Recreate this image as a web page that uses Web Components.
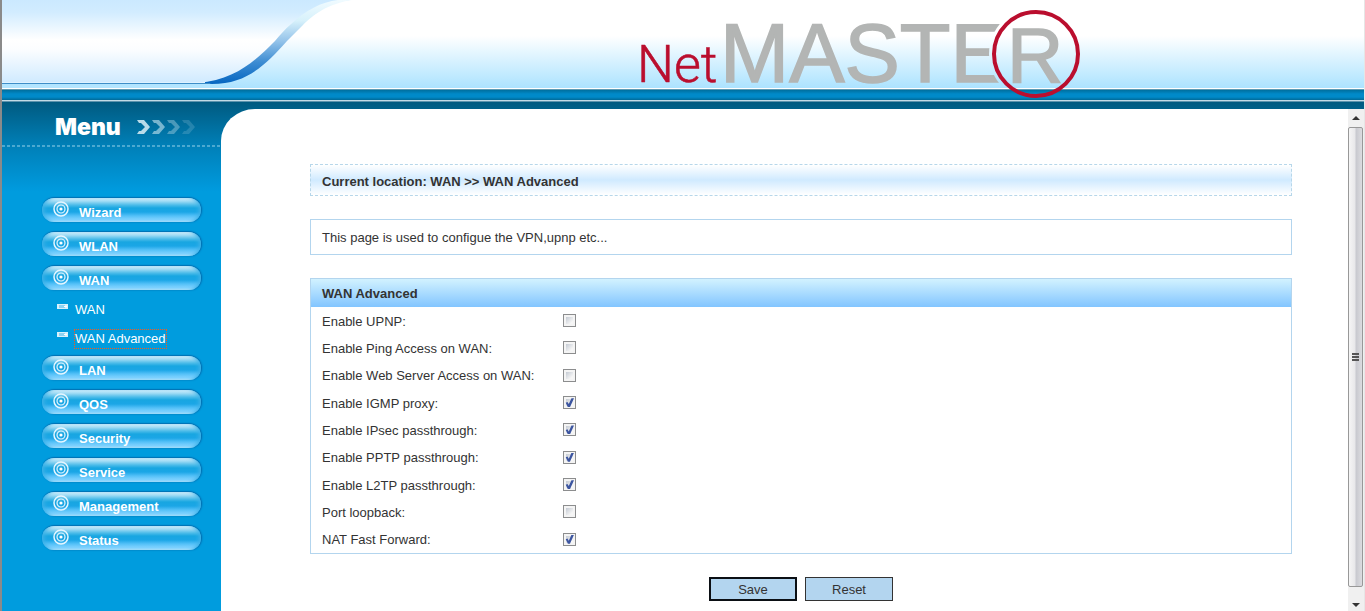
<!DOCTYPE html>
<html lang="en">
<head>
<meta charset="utf-8">
<title>NetMASTER - WAN Advanced</title>
<style>
  html, body { margin: 0; height: 100%; }
  body { font: 13px/16px "Liberation Sans", Arial, sans-serif; color: #333; background: #fff; overflow: hidden; }
</style>
</head>
<body>
<router-page>
  <brand-header slot="header"></brand-header>
  <side-menu slot="menu">
    <menu-group label="Wizard"></menu-group>
    <menu-group label="WLAN"></menu-group>
    <menu-group label="WAN">
      <menu-link>WAN</menu-link>
      <menu-link current>WAN Advanced</menu-link>
    </menu-group>
    <menu-group label="LAN"></menu-group>
    <menu-group label="QOS"></menu-group>
    <menu-group label="Security"></menu-group>
    <menu-group label="Service"></menu-group>
    <menu-group label="Management"></menu-group>
    <menu-group label="Status"></menu-group>
  </side-menu>
  <location-bar>Current location: WAN &gt;&gt; WAN Advanced</location-bar>
  <info-box>This page is used to configue the VPN,upnp etc...</info-box>
  <settings-panel></settings-panel>
  <form-actions></form-actions>
  <scroll-rail slot="rail"></scroll-rail>
</router-page>

<script>
function define(name, html, setup) {
  const template = document.createElement('template');
  template.innerHTML = html;
  customElements.define(name, class extends HTMLElement {
    constructor() {
      super();
      this.attachShadow({ mode: 'open' }).append(template.content.cloneNode(true));
      if (setup) setup(this, this.shadowRoot);
    }
  });
}

define('router-page', `
<style>
  :host { display: flex; flex-direction: column; box-sizing: border-box; height: 100vh;
    border-left: 2px solid #8a8a8a; border-right: 1px solid #e6e6e6; }
  .body { flex: 1; min-height: 0; display: grid; grid-template-columns: 219px minmax(0, 1fr);
    background: linear-gradient(#005a80, #0080b8 44px, #0099dc 86px, #009cde 90px); }
  .panel { margin-top: 7px; background: #fff; border-top-left-radius: 34px 32px; display: flex; min-height: 0; }
  main { flex: 1; min-width: 0; padding: 55px 56px 10px 89px; display: flex; flex-direction: column; overflow: hidden; }
</style>
<slot name="header"></slot>
<div class="body">
  <slot name="menu"></slot>
  <div class="panel"><main><slot></slot></main><slot name="rail"></slot></div>
</div>`);

define('brand-header', `
<style>
  :host { display: block; }
  .banner { height: 88px; display: flex; background: linear-gradient(#fff 36px, #ace3ff); }
  .swoosh { flex: none; width: 358px; height: 88px; }
  .logo { flex: none; width: 440px; height: 100px; margin-left: 280px; overflow: visible; z-index: 1; }
  .stripe { height: 14px; background: linear-gradient(#fff 1px, #5d9bb4 1px 2px, #006f9e 2px, #008ac9 6px, #008ac9 9px, #006a98 12px, #c2dbe6 12px 13px, #5c93ad 13px); }
</style>
<header>
  <div class="banner">
    <svg class="swoosh" viewBox="2 0 358 88" aria-hidden="true">
      <defs>
        <linearGradient id="sky" x1="0" y1="0" x2="0" y2="83" gradientUnits="userSpaceOnUse">
          <stop offset="0" stop-color="#cbe9ff"/><stop offset=".15" stop-color="#d2ecff"/><stop offset=".48" stop-color="#fff"/><stop offset=".6" stop-color="#fbfdff"/><stop offset="1" stop-color="#cfeaff"/>
        </linearGradient>
        <linearGradient id="wave" x1="0" y1="0" x2="0" y2="83" gradientUnits="userSpaceOnUse">
          <stop offset="0" stop-color="#f0fbff"/><stop offset=".25" stop-color="#d7f1fb"/><stop offset=".5" stop-color="#93c2e9"/><stop offset=".75" stop-color="#3d8cd2"/><stop offset="1" stop-color="#0868c2"/>
        </linearGradient>
      </defs>
      <path fill="url(#sky)" d="M0 0H350C325 3 310 16 289 38C268 62 250 83 212 83H0Z"/>
      <path fill="url(#wave)" d="M198 83C236 80 256 60 275 41C281 34 285 29 290 25C306 10 321 2 338 0H352C327 4 313 15 303 25L287 41C266 64 248 84 212 84Z"/>
      <path fill="#dff2ff" d="M0 82H205V83H0Z"/><path fill="#3e8ec8" d="M0 83H210V84H0Z"/>
      <path fill="#b3e5ff" d="M0 84H210V88H0Z"/>
    </svg>
    <svg class="logo" viewBox="640 0 440 100" role="img" aria-label="NetMASTER">
      <defs><mask id="cut" maskUnits="userSpaceOnUse" x="640" y="0" width="440" height="100">
        <rect x="640" width="440" height="100" fill="#fff"/><circle cx="1036" cy="54" r="47" fill="#000"/></mask></defs>
      <text x="637" y="82" font-family="Roboto, sans-serif" font-weight="300" font-size="52" fill="#ba0e2e" stroke="#ba0e2e" stroke-width=".5">Net</text>
      <g font-family="Liberation Sans, Arial, sans-serif" fill="#b3b5b4" stroke="#b3b5b4" stroke-width="1.5">
        <text x="720" y="82" font-size="83" mask="url(#cut)">MASTE</text><text x="1007" y="82" font-size="78">R</text>
      </g>
      <circle cx="1036" cy="54" r="42" fill="none" stroke="#ba0e2e" stroke-width="4"/>
    </svg>
  </div>
  <div class="stripe"></div>
</header>`);

define('side-menu', `
<style>
  :host { display: block; }
  .title { height: 43px; display: flex; align-items: center; gap: 16px; padding: 6px 0 0 53px; box-sizing: border-box; }
  h2 { margin: 0; font: 900 23px/24px Inter, sans-serif; color: #fff; }
  .dots { height: 2px; background: repeating-linear-gradient(90deg, #4da9d0 0 3px, transparent 3px 5px); }
  nav { padding: 51px 0 0 40px; }
</style>
<div class="title"><h2>Menu</h2>
  <svg width="60" height="14" viewBox="0 0 60 14" fill="#b9dbe9" aria-hidden="true">
    <path d="M0 0H7L13 7L7 14H0L2 11H4L8 7L4 3H2Z"/>
    <path opacity=".65" d="M15 0H22L28 7L22 14H15L17 11H19L23 7L19 3H17Z"/>
    <path opacity=".4" d="M30 0H37L43 7L37 14H30L32 11H34L38 7L34 3H32Z"/>
    <path opacity=".2" d="M45 0H52L58 7L52 14H45L47 11H49L53 7L49 3H47Z"/>
  </svg>
</div>
<div class="dots"></div>
<nav><slot></slot></nav>`);

define('menu-group', `
<style>
  :host { display: block; }
  a { display: flex; box-sizing: border-box; width: 159px; height: 24px; margin-bottom: 10px; padding: 3px 0 0 11px; gap: 10px;
    border-radius: 12px; color: #fff; font-weight: bold; text-decoration: none;
    background: linear-gradient(#e9f8ff, #a5ddf5 3px, #4dbce9 7px, #18a6e1 10px, #1ba6e6 14px, #55c1f8 18px, #84d4ff 22px, #c5ecff);
    box-shadow: inset 4px 0 4px -2px #3fb2e8, inset -4px 0 4px -2px #3fb2e8, 1px 0 2px #0067a8, 0 -1px 1px #0078bb; }
  svg { flex: none; }
  span { padding-top: 4px; }
</style>
<a href="#"><svg width="16" height="16" viewBox="0 0 16 16" fill="none" stroke="#e6f6ff" aria-hidden="true">
  <circle cx="8" cy="8" r="7" stroke-width="1.5"/><circle cx="8" cy="8" r="4" stroke-width="1.2"/><circle cx="8" cy="8" r="1.6" fill="#fff" stroke="none"/></svg><span></span></a>
<slot></slot>`, (el, root) => { root.querySelector('span').textContent = el.getAttribute('label'); });

define('menu-link', `
<style>
  :host { display: flex; height: 28px; gap: 7px; padding-left: 15px; }
  svg { flex: none; margin-top: 4px; }
  a { height: 17px; padding-top: 2px; color: #fff; text-decoration: none; }
  :host([current]) a { padding-top: 1px; margin: 1px 0 0 -1px; border: 1px dotted #ff5a14; }
</style>
<svg width="11" height="5" viewBox="0 0 11 5" aria-hidden="true"><path fill="#d9f0fb" d="M0 0H11V5H0Z"/><path fill="#8fd3f2" d="M2 1H8V4H2Z"/><path fill="#fff" d="M7 2H10V3H7Z"/></svg>
<a href="#"><slot></slot></a>`);

define('location-bar', `
<style>
  :host { display: block; box-sizing: border-box; height: 32px; padding: 8px 11px; margin-bottom: 23px; border: 1px dashed #b7d7ea;
    font-weight: bold; line-height: 18px; background: linear-gradient(#fff, #d0eaff 50%, #fff); }
</style>
<slot></slot>`);

define('info-box', `
<style>
  :host { display: block; padding: 10px 11px 8px; border: 1px solid #b3d5ee; margin-bottom: 23px; }
</style>
<slot></slot>`);

define('settings-panel', `
<style>
  :host { display: block; border: 1px solid #b3d5ee; margin-bottom: 23px; }
  h3 { margin: 0; padding: 7px 11px 5px; font: bold 13px/16px "Liberation Sans", Arial, sans-serif; background: linear-gradient(#d2f2ff, #82c5ff); }
  table { width: 100%; height: 246px; border-collapse: collapse; table-layout: fixed; }
  th, td { padding: 0; font-weight: normal; text-align: left; vertical-align: middle; }
  th { width: 241px; padding: 2px 0 0 11px; }
  input { appearance: none; display: block; box-sizing: border-box; width: 13px; height: 13px; margin: 0; border: 1px solid #8c8d8e;
    background: linear-gradient(135deg, #c4cad3, #f6f6f6 80%) content-box, #f4f4f4; padding: 2px; position: relative; }
  input:checked::after { content: ""; position: absolute; inset: 1px; background: #3c55a0;
    clip-path: polygon(8% 50%, 28% 42%, 42% 66%, 72% 0, 100% 0, 55% 100%, 32% 100%); }
</style>
<h3>WAN Advanced</h3>
<table><tbody></tbody></table>`, (el, root) => {
  const options = [
    ['upnp', 'Enable UPNP:', false],
    ['ping', 'Enable Ping Access on WAN:', false],
    ['web', 'Enable Web Server Access on WAN:', false],
    ['igmp', 'Enable IGMP proxy:', true],
    ['ipsec', 'Enable IPsec passthrough:', true],
    ['pptp', 'Enable PPTP passthrough:', true],
    ['l2tp', 'Enable L2TP passthrough:', true],
    ['loopback', 'Port loopback:', false],
    ['nat', 'NAT Fast Forward:', true]
  ];
  root.querySelector('tbody').innerHTML = options.map(([id, text, on]) =>
    `<tr><th scope="row"><label for="${id}">${text}</label></th><td><input type="checkbox" id="${id}"${on ? ' checked' : ''}></td></tr>`).join('');
});

define('form-actions', `
<style>
  :host { display: flex; justify-content: center; gap: 8px; }
  button { box-sizing: border-box; width: 88px; height: 24px; padding: 2px 0 0; border: 1px solid #333; border-radius: 0;
    background: #b3d5ef; color: #333; font: inherit; }
  .primary { border: 2px solid #0b0f14; }
</style>
<button class="primary" type="submit">Save</button><button type="reset">Reset</button>`);

define('scroll-rail', `
<style>
  :host { display: flex; flex-direction: column; align-items: center; flex: none; width: 16px; background: #f0f0f0; }
  .cap { height: 18px; display: flex; align-items: center; }
  .end { height: 24px; padding-top: 12px; box-sizing: border-box; }
  .thumb { flex: 1; align-self: stretch; box-sizing: border-box; margin-right: 1px; border: 1px solid #989898; border-radius: 2px;
    display: flex; align-items: center; justify-content: center; background: linear-gradient(90deg, #f5f5f5, #e8e8ea 45%, #c8c9cf 55%, #dcdce0); }
</style>
<div class="cap"><svg width="8" height="4"><path fill="#333" d="M0 4L4 0L8 4Z"/></svg></div>
<div class="thumb"><svg width="7" height="9" fill="#555"><path d="M0 0H7V2H0ZM0 3H7V5H0ZM0 6H7V8H0Z"/></svg></div>
<div class="cap end"><svg width="8" height="4"><path fill="#333" d="M0 0L4 4L8 0Z"/></svg></div>`);
</script>
</body>
</html>
